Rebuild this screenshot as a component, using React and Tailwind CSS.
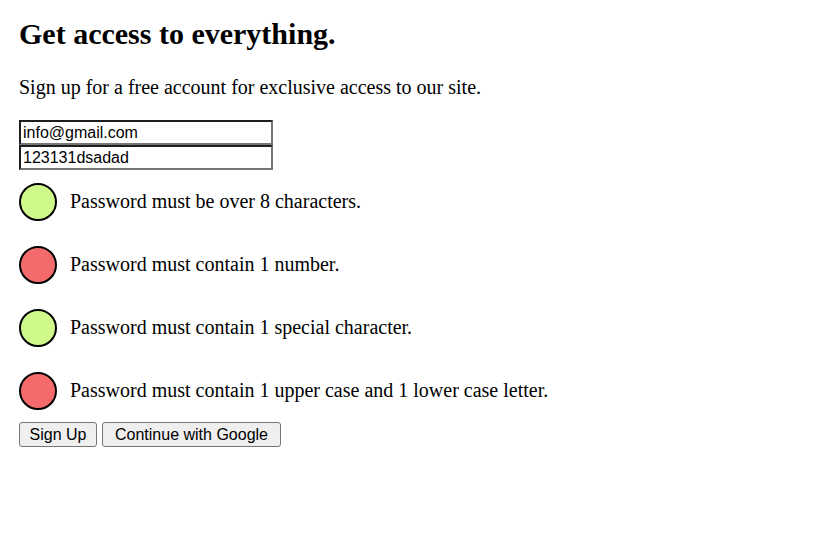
export default function App() {
  const rules = [
    { ok: true, text: "Password must be over 8 characters." },
    { ok: false, text: "Password must contain 1 number." },
    { ok: true, text: "Password must contain 1 special character." },
    { ok: false, text: "Password must contain 1 upper case and 1 lower case letter." },
  ];
  return (
    <div className="min-h-[547px] bg-white text-black px-[19px] pt-[16px] font-['Liberation_Serif',serif]">
      <h1 className="text-[30px] leading-[35px] font-bold">Get access to everything.</h1>
      <p className="mt-[25px] text-[20px] leading-[23px]">
        Sign up for a free account for exclusive access to our site.
      </p>
      <div className="mt-[21px] flex flex-col w-[254px]">
        <input
          defaultValue="info@gmail.com"
          className="h-[25px] w-[254px] border-2 border-t-[#1e1e1e] border-l-[#1e1e1e] border-r-[#767676] border-b-[#767676] pl-[2px] text-[16px] font-['Liberation_Sans',sans-serif] outline-none"
        />
        <input
          defaultValue="123131dsadad"
          className="h-[25px] w-[254px] border-2 border-t-[#1e1e1e] border-l-[#1e1e1e] border-r-[#767676] border-b-[#767676] pl-[2px] text-[16px] font-['Liberation_Sans',sans-serif] outline-none"
        />
      </div>
      <div className="mt-[13px] flex flex-col gap-[25px]">
        {rules.map((r, i) => (
          <div key={i} className="flex items-start gap-[13px]">
            <div
              className={
                r.ok
                  ? "w-[38px] h-[38px] rounded-full border-2 border-black bg-[#cff98b] shrink-0"
                  : "w-[38px] h-[38px] rounded-full border-2 border-black bg-[#f56b6b] shrink-0"
              }
            />
            <span className="mt-[7px] text-[20px] leading-[23px]">{r.text}</span>
          </div>
        ))}
      </div>
      <div className="mt-[12px] flex gap-[5px] font-['Liberation_Sans',sans-serif] text-[16px]">
        <button className="h-[25px] w-[78px] border border-[#767676] bg-[#efefef] rounded-[3px] leading-[21px]">
          Sign Up
        </button>
        <button className="h-[25px] w-[179px] border border-[#767676] bg-[#efefef] rounded-[3px] leading-[21px]">
          Continue with Google
        </button>
      </div>
    </div>
  );
}
